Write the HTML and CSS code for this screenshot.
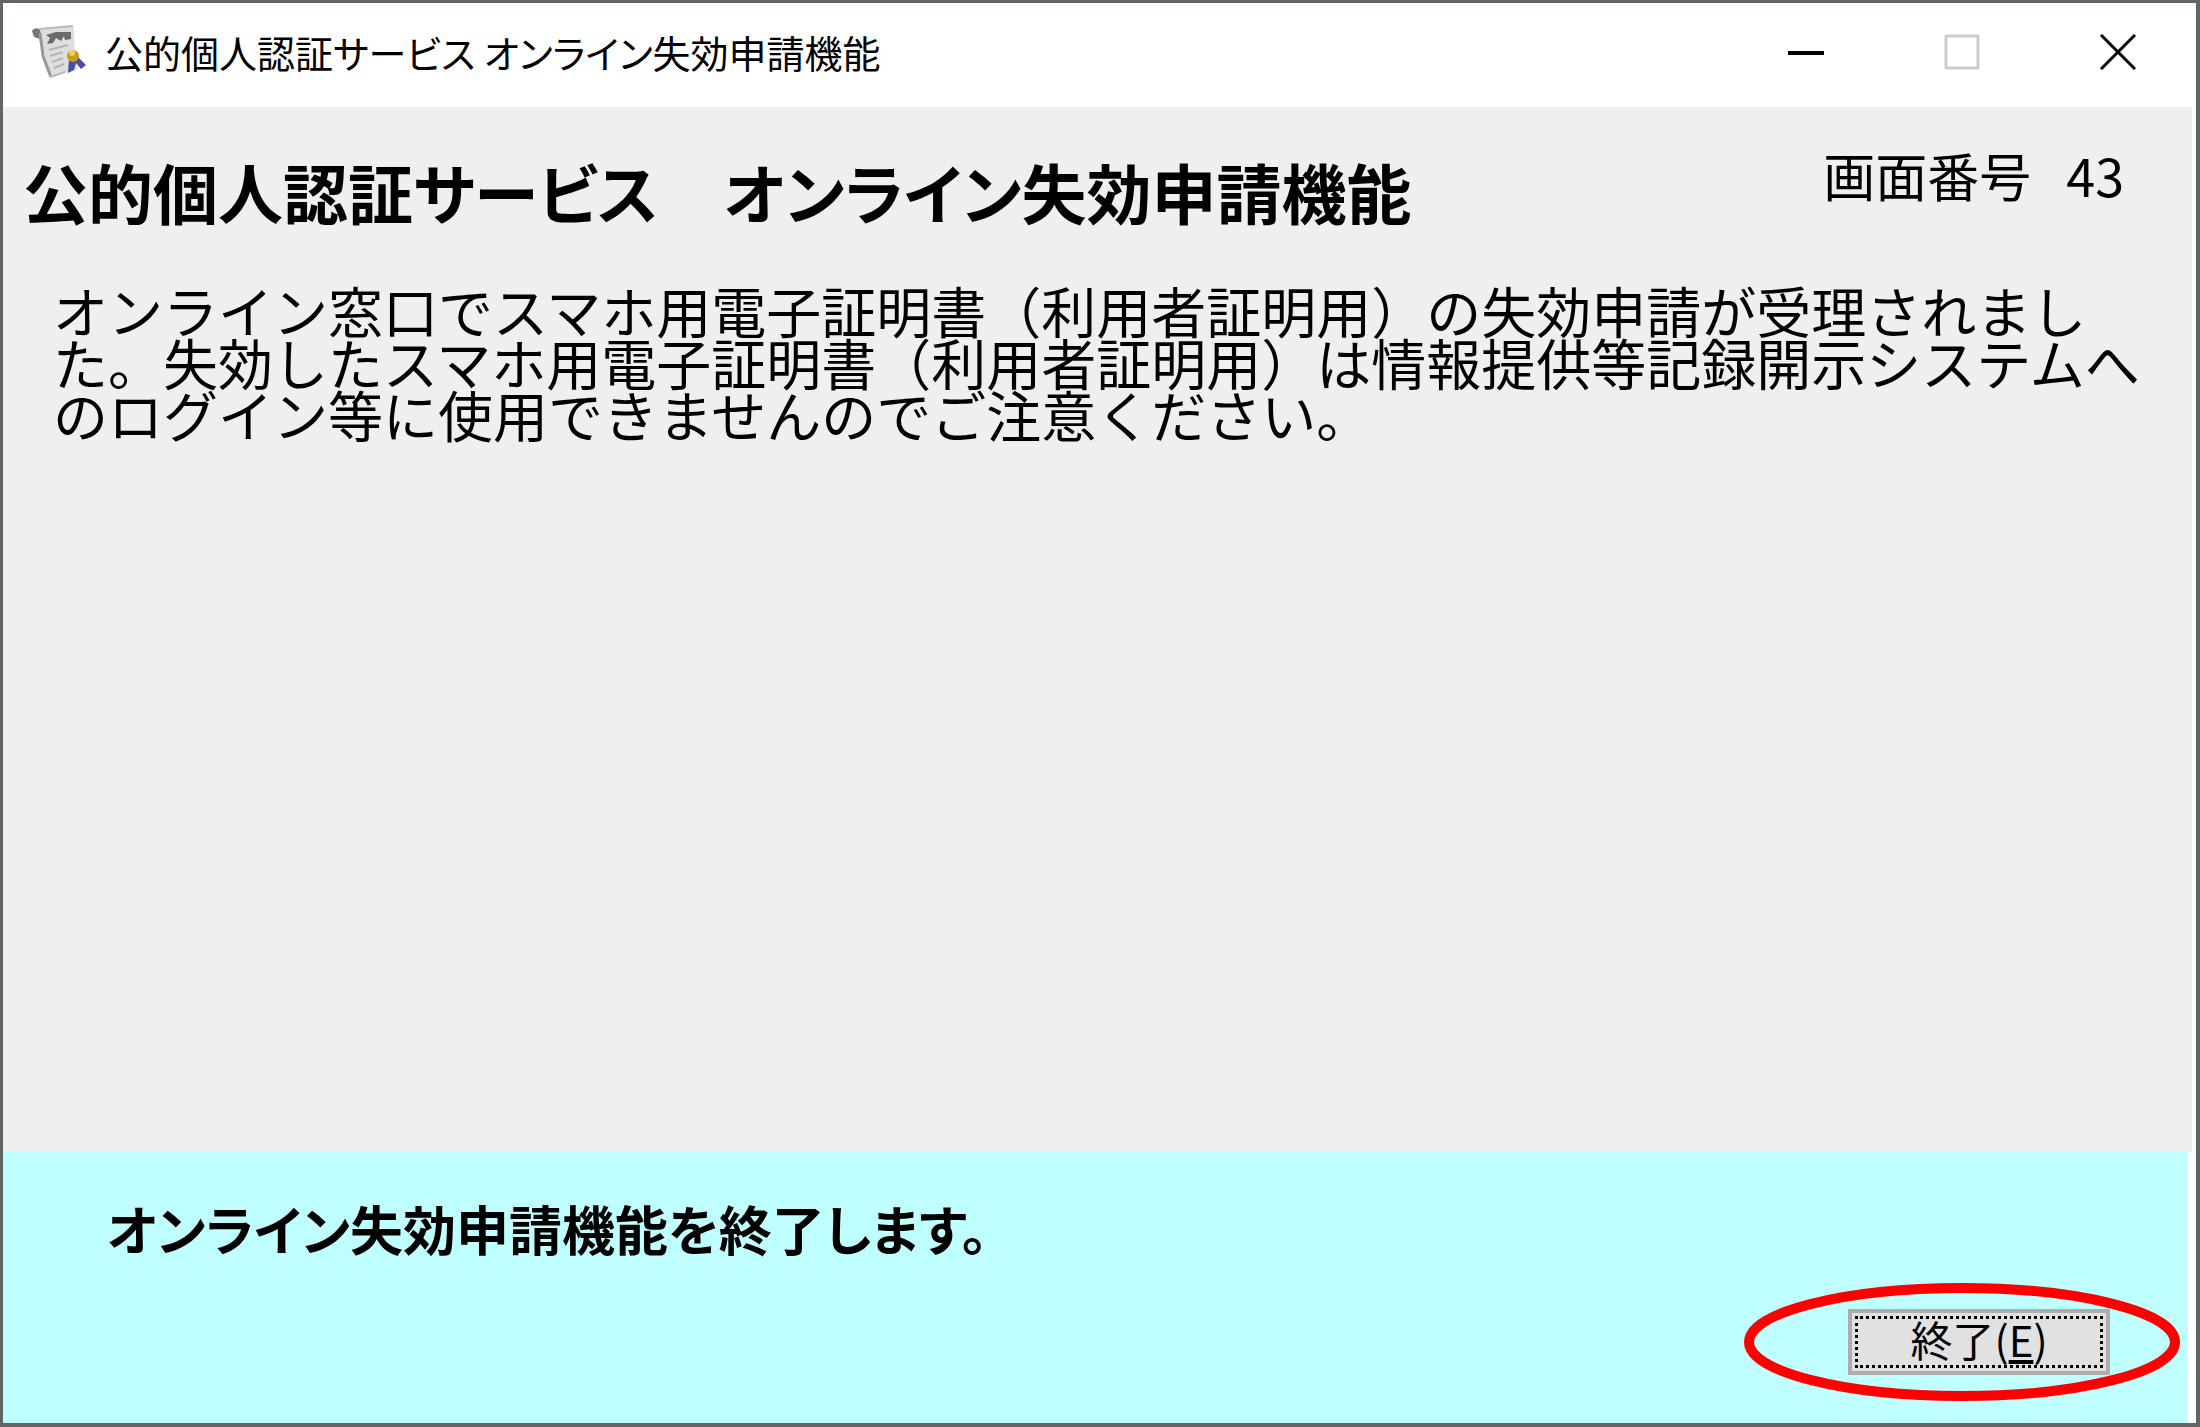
FILE: index.html
```html
<!DOCTYPE html>
<html lang="ja">
<head>
  <meta charset="utf-8">
  <title>公的個人認証サービス オンライン失効申請機能</title>
  <link rel="stylesheet" href="styles.css">
</head>
<body>
  <div class="window">
    <header class="title-bar">
      <svg class="app-icon" viewBox="0 0 56 56" aria-hidden="true">
        <path d="M7 5 L40 1 Q44 3 43 9 L44 34 L47 45 L19 54 L14 44 L9 18 Z" fill="#dedede"/>
        <path d="M1 7 Q3 3 8 5 Q11 8 9 15 L3 13 Z" fill="#777"/>
        <path d="M9 9 L12 32 L20 53" fill="none" stroke="#999" stroke-width="3"/>
        <path d="M8 5 L42 2 M19 53 L34 48" fill="none" stroke="#bbb" stroke-width="2"/>
        <path d="M15 11 L25 8 L40 8 L40 15 L34 16 L33 12 L30 17 L25 14 L22 19 L16 20 L19 14 Z" fill="#6a6a6a"/>
        <path d="M18 26 L37 21 M19 32 L32 28 M21 38 L32 34 M23 44 L33 40" stroke="#b5b5b5" stroke-width="2"/>
        <path d="M38 35 L37 49 L43 46 L45 39 L50 45 L55 41 L47 33 Z" fill="#4450a0"/>
        <circle cx="42" cy="32" r="6" fill="#c79a1c"/>
        <circle cx="41" cy="29" r="3" fill="#f0d060"/>
      </svg>
      <span class="title-text">公的個人認証サービス オンライン失効申請機能</span>
      <div class="window-controls">
        <button type="button" aria-label="最小化">
          <svg viewBox="0 0 36 36"><path d="M0 19 H36" stroke="#000" stroke-width="4"/></svg>
        </button>
        <button type="button" aria-label="最大化" disabled>
          <svg viewBox="0 0 36 36"><rect x="2" y="2" width="32" height="32" fill="none" stroke="#ccc" stroke-width="3"/></svg>
        </button>
        <button type="button" aria-label="閉じる">
          <svg viewBox="0 0 36 36"><path d="M1 1 L35 35 M35 1 L1 35" stroke="#000" stroke-width="3"/></svg>
        </button>
      </div>
    </header>

    <main class="content">
      <div class="heading-row">
        <h1>公的個人認証サービス　オンライン失効申請機能</h1>
        <p class="screen-number">画面番号&nbsp;&nbsp; 43</p>
      </div>
      <p class="message">オンライン窓口でスマホ用電子証明書（利用者証明用）の失効申請が受理されました。失効したスマホ用電子証明書（利用者証明用）は情報提供等記録開示システムへのログイン等に使用できませんのでご注意ください。</p>
    </main>

    <footer class="footer">
      <p class="guide">オンライン失効申請機能を終了します。</p>
      <div class="actions">
        <button type="button" class="exit-button" accesskey="e"><span class="focus-ring">終了(<u>E</u>)</span></button>
        <svg class="highlight" viewBox="0 0 436 118" aria-hidden="true">
          <ellipse cx="218" cy="59" rx="213" ry="54" fill="none" stroke="#f00" stroke-width="10"/>
        </svg>
      </div>
    </footer>
  </div>
</body>
</html>
```

FILE: styles.css
```css
* {
  box-sizing: border-box;
}
body {
  margin: 0;
  padding: 3px 4px 4px 3px;
  min-height: 100vh;
  display: flex;
  background: #626565;
  color: #000;
  font-family: "Noto Sans CJK JP", sans-serif;
}
h1, p {
  margin: 0;
}
.window {
  flex: 1;
  display: flex;
  flex-direction: column;
  background: #fff;
}

/* title bar */
.title-bar {
  display: flex;
  align-items: center;
  height: 104px;
  padding: 0 0 6px 28px;
}
.app-icon {
  width: 56px;
  height: 56px;
  margin-right: 18px;
}
.title-text {
  font-size: 38px;
  line-height: 60px;
  font-feature-settings: "palt";
}
.window-controls {
  display: flex;
  margin-left: auto;
}
.window-controls button {
  width: 156px;
  height: 96px;
  padding: 0;
  border: 0;
  background: none;
}
.window-controls svg {
  display: block;
  width: 36px;
  height: 36px;
  margin: 0 auto;
}

/* main area */
.content {
  flex: 1;
  margin-right: 4px;
  padding: 36px 48px 0 20px;
  background: #efefef;
}
.heading-row {
  display: flex;
  justify-content: space-between;
  align-items: flex-start;
}
h1 {
  font-size: 65px;
  line-height: 96px;
  font-weight: bold;
  font-feature-settings: "palt";
}
.screen-number {
  margin-right: 20px;
  font-size: 52px;
  line-height: 64px;
}
.message {
  margin-top: 44px;
  padding-left: 30px;
  font-size: 55px;
  line-height: 52px;
  text-spacing-trim: space-all;
}

/* guide and exit button */
.footer {
  margin-right: 8px;
  padding: 40px 78px 48px 104px;
  background: #c0ffff;
}
.guide {
  font-size: 53px;
  line-height: 72px;
  font-weight: bold;
  font-feature-settings: "palt";
}
.actions {
  position: relative;
  width: 262px;
  margin: 45px 0 0 auto;
}
.exit-button {
  display: block;
  width: 262px;
  height: 66px;
  padding: 3px;
  border: 4px solid #adadad;
  background: #e1e1e1;
  color: #000;
  font-family: inherit;
  font-size: 42px;
  line-height: 40px;
}
.focus-ring {
  display: block;
  height: 52px;
  border: 3px dotted #000;
  font-feature-settings: "palt";
}
.highlight {
  position: absolute;
  top: -26px;
  left: -104px;
  width: 436px;
  height: 118px;
  pointer-events: none;
}
```
